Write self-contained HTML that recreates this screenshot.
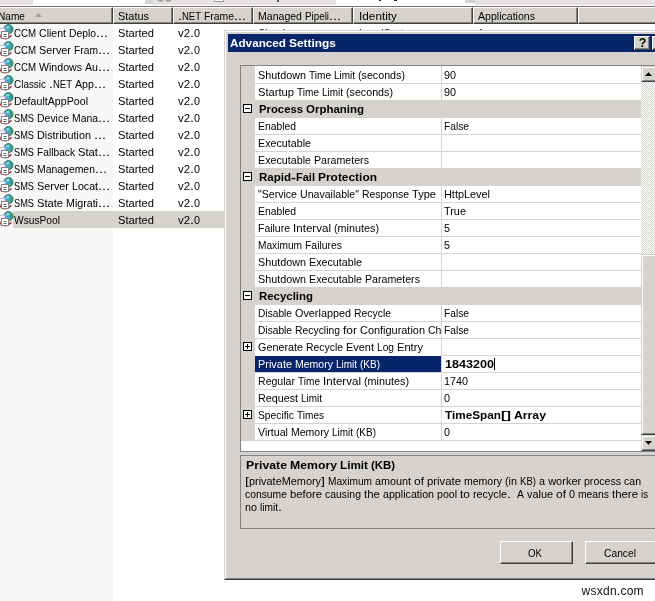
<!DOCTYPE html><html><head><meta charset="utf-8"><title>Advanced Settings</title><style>
html,body{margin:0;padding:0;background:#fff;}
body{width:655px;height:601px;overflow:hidden;position:relative;font-family:"Liberation Sans",sans-serif;font-size:11px;color:#000;}
div,span{position:absolute;box-sizing:border-box;}
.t{white-space:pre;line-height:13px;height:13px;font-size:11px;word-spacing:-0.06px;}
.b{font-weight:bold;}
.t span{position:static;display:inline-block;transform-origin:0 0;}
.hd{top:7px;height:17px;background:#d6d3ce;border-top:1px solid #fff;border-left:1px solid #fff;border-right:1px solid #424142;border-bottom:1px solid #424142;}
.hd i{position:absolute;right:0;top:0;bottom:0;width:1px;background:#848284;}
.hd b{position:absolute;left:0;right:0;bottom:0;height:1px;background:#848284;}
.rb{background:#d6d3ce;border:1px solid #fff;border-right-color:#424142;border-bottom-color:#424142;}
.rb>i{position:absolute;left:0;top:0;right:0;bottom:0;border-right:1px solid #848284;border-bottom:1px solid #848284;}
.sb{background:#d6d3ce;border:1px solid #d6d3ce;border-right-color:#424142;border-bottom-color:#424142;}
.sb>i{position:absolute;left:0;top:0;right:0;bottom:0;border:1px solid #fff;border-right-color:#848284;border-bottom-color:#848284;}
svg{position:absolute;overflow:visible;}
#all{left:0;top:0;width:655px;height:601px;overflow:hidden;will-change:transform;}
</style></head><body><div id="all">
<div style="left:0;top:0;width:33px;height:5px;background:#e7e2df"></div>
<div style="left:145px;top:0;width:8px;height:4px;background:#d6d3ce"></div>
<div style="left:153px;top:0;width:183px;height:5px;background:#e7e2df"></div>
<div style="left:157px;top:-5px;width:7px;height:7px;border-radius:4px;background:#a8a4a0"></div>
<div style="left:165px;top:-5px;width:7px;height:7px;border-radius:4px;background:#a8a4a0"></div>
<div style="left:214px;top:0;width:10px;height:2px;background:#fff;border:1px solid #999;border-top:0"></div>
<div style="left:277px;top:0;width:2px;height:2px;background:#555"></div>
<div style="left:379px;top:0;width:2px;height:1px;background:#222"></div>
<div style="left:394px;top:0;width:3px;height:1px;background:#222"></div>
<div style="left:465px;top:0;width:10px;height:3px;background:#d6d3ce"></div>
<div style="left:475px;top:0;width:180px;height:5px;background:#e7e2df"></div>
<div style="left:0;top:6px;width:655px;height:1px;background:#757575"></div>
<div style="left:0;top:24px;width:113px;height:577px;background:#f7f7f7"></div>
<div class="hd" style="left:-2px;width:115px"><i></i><b></b></div>
<div class="hd" style="left:113px;width:60px"><i></i><b></b></div>
<div class="hd" style="left:173px;width:80px"><i></i><b></b></div>
<div class="hd" style="left:253px;width:100px"><i></i><b></b></div>
<div class="hd" style="left:353px;width:120px"><i></i><b></b></div>
<div class="hd" style="left:473px;width:105px"><i></i><b></b></div>
<div class="hd" style="left:578px;width:90px"><i></i><b></b></div>
<svg style="left:35px;top:13px" width="7" height="4"><path d="M0 4 L3.5 0 L7 4Z" fill="#a09c98"/></svg>
<svg style="left:-3px;top:24px" width="16" height="16" viewBox="0 0 16 16">
<g transform="translate(0.9,-0.2) scale(0.96)">
<circle cx="11" cy="5.6" r="4.8" fill="#46a2da" stroke="#2a6e62" stroke-width="0.9"/>
<path d="M12 1.2 Q15.7 2.8 15.7 6 Q15.3 9.3 12.6 10.3 Q13.6 8 13 5.5 Q12.6 3.2 12 1.2Z" fill="#36a058"/>
<path d="M7.2 2.6 Q8.6 0.9 10.6 1 Q9.8 2.6 8.2 3.2Z" fill="#3a9466"/>
<ellipse cx="10.3" cy="3.6" rx="1.8" ry="1.2" fill="#8fd4f0"/>
</g>
<path d="M2.4 11.6 Q8 17.6 14.4 11.4" fill="none" stroke="#a43e34" stroke-width="1.7"/>
<rect x="1.5" y="4.500" width="6.500" height="6" fill="#f6f4fa" stroke="#c4c0cc"/>
<rect x="4.5" y="7.500" width="7" height="7" fill="#fff" stroke="#8c8282"/>
<path d="M6.5 10.500 H9.5 M6.5 12.500 H9.5" stroke="#4a6a88" stroke-width="1"/>
</svg>
<svg style="left:-3px;top:41px" width="16" height="16" viewBox="0 0 16 16">
<g transform="translate(0.9,-0.2) scale(0.96)">
<circle cx="11" cy="5.6" r="4.8" fill="#46a2da" stroke="#2a6e62" stroke-width="0.9"/>
<path d="M12 1.2 Q15.7 2.8 15.7 6 Q15.3 9.3 12.6 10.3 Q13.6 8 13 5.5 Q12.6 3.2 12 1.2Z" fill="#36a058"/>
<path d="M7.2 2.6 Q8.6 0.9 10.6 1 Q9.8 2.6 8.2 3.2Z" fill="#3a9466"/>
<ellipse cx="10.3" cy="3.6" rx="1.8" ry="1.2" fill="#8fd4f0"/>
</g>
<path d="M2.4 11.6 Q8 17.6 14.4 11.4" fill="none" stroke="#a43e34" stroke-width="1.7"/>
<rect x="1.5" y="4.500" width="6.500" height="6" fill="#f6f4fa" stroke="#c4c0cc"/>
<rect x="4.5" y="7.500" width="7" height="7" fill="#fff" stroke="#8c8282"/>
<path d="M6.5 10.500 H9.5 M6.5 12.500 H9.5" stroke="#4a6a88" stroke-width="1"/>
</svg>
<svg style="left:-3px;top:58px" width="16" height="16" viewBox="0 0 16 16">
<g transform="translate(0.9,-0.2) scale(0.96)">
<circle cx="11" cy="5.6" r="4.8" fill="#46a2da" stroke="#2a6e62" stroke-width="0.9"/>
<path d="M12 1.2 Q15.7 2.8 15.7 6 Q15.3 9.3 12.6 10.3 Q13.6 8 13 5.5 Q12.6 3.2 12 1.2Z" fill="#36a058"/>
<path d="M7.2 2.6 Q8.6 0.9 10.6 1 Q9.8 2.6 8.2 3.2Z" fill="#3a9466"/>
<ellipse cx="10.3" cy="3.6" rx="1.8" ry="1.2" fill="#8fd4f0"/>
</g>
<path d="M2.4 11.6 Q8 17.6 14.4 11.4" fill="none" stroke="#a43e34" stroke-width="1.7"/>
<rect x="1.5" y="4.500" width="6.500" height="6" fill="#f6f4fa" stroke="#c4c0cc"/>
<rect x="4.5" y="7.500" width="7" height="7" fill="#fff" stroke="#8c8282"/>
<path d="M6.5 10.500 H9.5 M6.5 12.500 H9.5" stroke="#4a6a88" stroke-width="1"/>
</svg>
<svg style="left:-3px;top:75px" width="16" height="16" viewBox="0 0 16 16">
<g transform="translate(0.9,-0.2) scale(0.96)">
<circle cx="11" cy="5.6" r="4.8" fill="#46a2da" stroke="#2a6e62" stroke-width="0.9"/>
<path d="M12 1.2 Q15.7 2.8 15.7 6 Q15.3 9.3 12.6 10.3 Q13.6 8 13 5.5 Q12.6 3.2 12 1.2Z" fill="#36a058"/>
<path d="M7.2 2.6 Q8.6 0.9 10.6 1 Q9.8 2.6 8.2 3.2Z" fill="#3a9466"/>
<ellipse cx="10.3" cy="3.6" rx="1.8" ry="1.2" fill="#8fd4f0"/>
</g>
<path d="M2.4 11.6 Q8 17.6 14.4 11.4" fill="none" stroke="#a43e34" stroke-width="1.7"/>
<rect x="1.5" y="4.500" width="6.500" height="6" fill="#f6f4fa" stroke="#c4c0cc"/>
<rect x="4.5" y="7.500" width="7" height="7" fill="#fff" stroke="#8c8282"/>
<path d="M6.5 10.500 H9.5 M6.5 12.500 H9.5" stroke="#4a6a88" stroke-width="1"/>
</svg>
<svg style="left:-3px;top:92px" width="16" height="16" viewBox="0 0 16 16">
<g transform="translate(0.9,-0.2) scale(0.96)">
<circle cx="11" cy="5.6" r="4.8" fill="#46a2da" stroke="#2a6e62" stroke-width="0.9"/>
<path d="M12 1.2 Q15.7 2.8 15.7 6 Q15.3 9.3 12.6 10.3 Q13.6 8 13 5.5 Q12.6 3.2 12 1.2Z" fill="#36a058"/>
<path d="M7.2 2.6 Q8.6 0.9 10.6 1 Q9.8 2.6 8.2 3.2Z" fill="#3a9466"/>
<ellipse cx="10.3" cy="3.6" rx="1.8" ry="1.2" fill="#8fd4f0"/>
</g>
<path d="M2.4 11.6 Q8 17.6 14.4 11.4" fill="none" stroke="#a43e34" stroke-width="1.7"/>
<rect x="1.5" y="4.500" width="6.500" height="6" fill="#f6f4fa" stroke="#c4c0cc"/>
<rect x="4.5" y="7.500" width="7" height="7" fill="#fff" stroke="#8c8282"/>
<path d="M6.5 10.500 H9.5 M6.5 12.500 H9.5" stroke="#4a6a88" stroke-width="1"/>
</svg>
<svg style="left:-3px;top:109px" width="16" height="16" viewBox="0 0 16 16">
<g transform="translate(0.9,-0.2) scale(0.96)">
<circle cx="11" cy="5.6" r="4.8" fill="#46a2da" stroke="#2a6e62" stroke-width="0.9"/>
<path d="M12 1.2 Q15.7 2.8 15.7 6 Q15.3 9.3 12.6 10.3 Q13.6 8 13 5.5 Q12.6 3.2 12 1.2Z" fill="#36a058"/>
<path d="M7.2 2.6 Q8.6 0.9 10.6 1 Q9.8 2.6 8.2 3.2Z" fill="#3a9466"/>
<ellipse cx="10.3" cy="3.6" rx="1.8" ry="1.2" fill="#8fd4f0"/>
</g>
<path d="M2.4 11.6 Q8 17.6 14.4 11.4" fill="none" stroke="#a43e34" stroke-width="1.7"/>
<rect x="1.5" y="4.500" width="6.500" height="6" fill="#f6f4fa" stroke="#c4c0cc"/>
<rect x="4.5" y="7.500" width="7" height="7" fill="#fff" stroke="#8c8282"/>
<path d="M6.5 10.500 H9.5 M6.5 12.500 H9.5" stroke="#4a6a88" stroke-width="1"/>
</svg>
<svg style="left:-3px;top:126px" width="16" height="16" viewBox="0 0 16 16">
<g transform="translate(0.9,-0.2) scale(0.96)">
<circle cx="11" cy="5.6" r="4.8" fill="#46a2da" stroke="#2a6e62" stroke-width="0.9"/>
<path d="M12 1.2 Q15.7 2.8 15.7 6 Q15.3 9.3 12.6 10.3 Q13.6 8 13 5.5 Q12.6 3.2 12 1.2Z" fill="#36a058"/>
<path d="M7.2 2.6 Q8.6 0.9 10.6 1 Q9.8 2.6 8.2 3.2Z" fill="#3a9466"/>
<ellipse cx="10.3" cy="3.6" rx="1.8" ry="1.2" fill="#8fd4f0"/>
</g>
<path d="M2.4 11.6 Q8 17.6 14.4 11.4" fill="none" stroke="#a43e34" stroke-width="1.7"/>
<rect x="1.5" y="4.500" width="6.500" height="6" fill="#f6f4fa" stroke="#c4c0cc"/>
<rect x="4.5" y="7.500" width="7" height="7" fill="#fff" stroke="#8c8282"/>
<path d="M6.5 10.500 H9.5 M6.5 12.500 H9.5" stroke="#4a6a88" stroke-width="1"/>
</svg>
<svg style="left:-3px;top:143px" width="16" height="16" viewBox="0 0 16 16">
<g transform="translate(0.9,-0.2) scale(0.96)">
<circle cx="11" cy="5.6" r="4.8" fill="#46a2da" stroke="#2a6e62" stroke-width="0.9"/>
<path d="M12 1.2 Q15.7 2.8 15.7 6 Q15.3 9.3 12.6 10.3 Q13.6 8 13 5.5 Q12.6 3.2 12 1.2Z" fill="#36a058"/>
<path d="M7.2 2.6 Q8.6 0.9 10.6 1 Q9.8 2.6 8.2 3.2Z" fill="#3a9466"/>
<ellipse cx="10.3" cy="3.6" rx="1.8" ry="1.2" fill="#8fd4f0"/>
</g>
<path d="M2.4 11.6 Q8 17.6 14.4 11.4" fill="none" stroke="#a43e34" stroke-width="1.7"/>
<rect x="1.5" y="4.500" width="6.500" height="6" fill="#f6f4fa" stroke="#c4c0cc"/>
<rect x="4.5" y="7.500" width="7" height="7" fill="#fff" stroke="#8c8282"/>
<path d="M6.5 10.500 H9.5 M6.5 12.500 H9.5" stroke="#4a6a88" stroke-width="1"/>
</svg>
<svg style="left:-3px;top:160px" width="16" height="16" viewBox="0 0 16 16">
<g transform="translate(0.9,-0.2) scale(0.96)">
<circle cx="11" cy="5.6" r="4.8" fill="#46a2da" stroke="#2a6e62" stroke-width="0.9"/>
<path d="M12 1.2 Q15.7 2.8 15.7 6 Q15.3 9.3 12.6 10.3 Q13.6 8 13 5.5 Q12.6 3.2 12 1.2Z" fill="#36a058"/>
<path d="M7.2 2.6 Q8.6 0.9 10.6 1 Q9.8 2.6 8.2 3.2Z" fill="#3a9466"/>
<ellipse cx="10.3" cy="3.6" rx="1.8" ry="1.2" fill="#8fd4f0"/>
</g>
<path d="M2.4 11.6 Q8 17.6 14.4 11.4" fill="none" stroke="#a43e34" stroke-width="1.7"/>
<rect x="1.5" y="4.500" width="6.500" height="6" fill="#f6f4fa" stroke="#c4c0cc"/>
<rect x="4.5" y="7.500" width="7" height="7" fill="#fff" stroke="#8c8282"/>
<path d="M6.5 10.500 H9.5 M6.5 12.500 H9.5" stroke="#4a6a88" stroke-width="1"/>
</svg>
<svg style="left:-3px;top:177px" width="16" height="16" viewBox="0 0 16 16">
<g transform="translate(0.9,-0.2) scale(0.96)">
<circle cx="11" cy="5.6" r="4.8" fill="#46a2da" stroke="#2a6e62" stroke-width="0.9"/>
<path d="M12 1.2 Q15.7 2.8 15.7 6 Q15.3 9.3 12.6 10.3 Q13.6 8 13 5.5 Q12.6 3.2 12 1.2Z" fill="#36a058"/>
<path d="M7.2 2.6 Q8.6 0.9 10.6 1 Q9.8 2.6 8.2 3.2Z" fill="#3a9466"/>
<ellipse cx="10.3" cy="3.6" rx="1.8" ry="1.2" fill="#8fd4f0"/>
</g>
<path d="M2.4 11.6 Q8 17.6 14.4 11.4" fill="none" stroke="#a43e34" stroke-width="1.7"/>
<rect x="1.5" y="4.500" width="6.500" height="6" fill="#f6f4fa" stroke="#c4c0cc"/>
<rect x="4.5" y="7.500" width="7" height="7" fill="#fff" stroke="#8c8282"/>
<path d="M6.5 10.500 H9.5 M6.5 12.500 H9.5" stroke="#4a6a88" stroke-width="1"/>
</svg>
<svg style="left:-3px;top:194px" width="16" height="16" viewBox="0 0 16 16">
<g transform="translate(0.9,-0.2) scale(0.96)">
<circle cx="11" cy="5.6" r="4.8" fill="#46a2da" stroke="#2a6e62" stroke-width="0.9"/>
<path d="M12 1.2 Q15.7 2.8 15.7 6 Q15.3 9.3 12.6 10.3 Q13.6 8 13 5.5 Q12.6 3.2 12 1.2Z" fill="#36a058"/>
<path d="M7.2 2.6 Q8.6 0.9 10.6 1 Q9.8 2.6 8.2 3.2Z" fill="#3a9466"/>
<ellipse cx="10.3" cy="3.6" rx="1.8" ry="1.2" fill="#8fd4f0"/>
</g>
<path d="M2.4 11.6 Q8 17.6 14.4 11.4" fill="none" stroke="#a43e34" stroke-width="1.7"/>
<rect x="1.5" y="4.500" width="6.500" height="6" fill="#f6f4fa" stroke="#c4c0cc"/>
<rect x="4.5" y="7.500" width="7" height="7" fill="#fff" stroke="#8c8282"/>
<path d="M6.5 10.500 H9.5 M6.5 12.500 H9.5" stroke="#4a6a88" stroke-width="1"/>
</svg>
<div style="left:13px;top:211px;width:213px;height:17px;background:#d6d3ce"></div>
<svg style="left:-3px;top:211px" width="16" height="16" viewBox="0 0 16 16">
<g transform="translate(0.9,-0.2) scale(0.96)">
<circle cx="11" cy="5.6" r="4.8" fill="#46a2da" stroke="#2a6e62" stroke-width="0.9"/>
<path d="M12 1.2 Q15.7 2.8 15.7 6 Q15.3 9.3 12.6 10.3 Q13.6 8 13 5.5 Q12.6 3.2 12 1.2Z" fill="#36a058"/>
<path d="M7.2 2.6 Q8.6 0.9 10.6 1 Q9.8 2.6 8.2 3.2Z" fill="#3a9466"/>
<ellipse cx="10.3" cy="3.6" rx="1.8" ry="1.2" fill="#8fd4f0"/>
</g>
<path d="M2.4 11.6 Q8 17.6 14.4 11.4" fill="none" stroke="#a43e34" stroke-width="1.7"/>
<rect x="1.5" y="4.500" width="6.500" height="6" fill="#f6f4fa" stroke="#c4c0cc"/>
<rect x="4.5" y="7.500" width="7" height="7" fill="#fff" stroke="#8c8282"/>
<path d="M6.5 10.500 H9.5 M6.5 12.500 H9.5" stroke="#4a6a88" stroke-width="1"/>
</svg>
<span class="t" style="left:-1.90px;top:9.70px;"><span style="transform:scaleX(0.920);margin-right:-2.34px">Name</span></span>
<span class="t" style="left:118.10px;top:9.70px;"><span style="transform:scaleX(0.994);margin-right:-0.19px">Status</span></span>
<span class="t" style="left:178.10px;top:9.70px;"><span style="transform:scaleX(1.306);margin-right:0.94px">.</span><span style="transform:scaleX(0.864);margin-right:-3.00px">NET</span> <span style="transform:scaleX(0.944);margin-right:-1.78px">Frame</span><span style="transform:scaleX(1.308);margin-right:2.83px">...</span></span>
<span class="t" style="left:258.10px;top:9.70px;"><span style="transform:scaleX(0.959);margin-right:-1.88px">Managed</span> <span style="transform:scaleX(0.892);margin-right:-2.91px">Pipeli</span><span style="transform:scaleX(1.308);margin-right:2.83px">...</span></span>
<span class="t" style="left:359.10px;top:9.70px;"><span style="transform:scaleX(1.071);margin-right:2.53px">Identity</span></span>
<span class="t" style="left:478.10px;top:9.70px;"><span style="transform:scaleX(0.961);margin-right:-2.33px">Applications</span></span>
<span class="t" style="left:14.10px;top:26.70px;"><span style="transform:scaleX(0.878);margin-right:-3.06px">CCM</span> <span style="transform:scaleX(0.960);margin-right:-1.12px">Client</span> <span style="transform:scaleX(0.939);margin-right:-1.75px">Deplo</span><span style="transform:scaleX(1.308);margin-right:2.83px">...</span></span>
<span class="t" style="left:118.10px;top:26.70px;"><span style="transform:scaleX(1.015);margin-right:0.53px">Started</span></span>
<span class="t" style="left:178.10px;top:26.70px;"><span style="transform:scaleX(1.032);margin-right:0.38px">v2</span><span style="transform:scaleX(1.306);margin-right:0.94px">.</span><span style="transform:scaleX(0.980);margin-right:-0.12px">0</span></span>
<span class="t" style="left:14.10px;top:43.70px;"><span style="transform:scaleX(0.878);margin-right:-3.06px">CCM</span> <span style="transform:scaleX(0.987);margin-right:-0.41px">Server</span> <span style="transform:scaleX(0.935);margin-right:-1.67px">Fram</span><span style="transform:scaleX(1.308);margin-right:2.83px">...</span></span>
<span class="t" style="left:118.10px;top:43.70px;"><span style="transform:scaleX(1.015);margin-right:0.53px">Started</span></span>
<span class="t" style="left:178.10px;top:43.70px;"><span style="transform:scaleX(1.032);margin-right:0.38px">v2</span><span style="transform:scaleX(1.306);margin-right:0.94px">.</span><span style="transform:scaleX(0.980);margin-right:-0.12px">0</span></span>
<span class="t" style="left:14.10px;top:60.70px;"><span style="transform:scaleX(0.878);margin-right:-3.06px">CCM</span> <span style="transform:scaleX(0.964);margin-right:-1.62px">Windows</span> <span style="transform:scaleX(0.965);margin-right:-0.47px">Au</span><span style="transform:scaleX(1.308);margin-right:2.83px">...</span></span>
<span class="t" style="left:118.10px;top:60.70px;"><span style="transform:scaleX(1.015);margin-right:0.53px">Started</span></span>
<span class="t" style="left:178.10px;top:60.70px;"><span style="transform:scaleX(1.032);margin-right:0.38px">v2</span><span style="transform:scaleX(1.306);margin-right:0.94px">.</span><span style="transform:scaleX(0.980);margin-right:-0.12px">0</span></span>
<span class="t" style="left:14.10px;top:77.70px;"><span style="transform:scaleX(0.903);margin-right:-3.45px">Classic</span> <span style="transform:scaleX(1.306);margin-right:0.94px">.</span><span style="transform:scaleX(0.864);margin-right:-3.00px">NET</span> <span style="transform:scaleX(0.970);margin-right:-0.58px">App</span><span style="transform:scaleX(1.308);margin-right:2.83px">...</span></span>
<span class="t" style="left:118.10px;top:77.70px;"><span style="transform:scaleX(1.015);margin-right:0.53px">Started</span></span>
<span class="t" style="left:178.10px;top:77.70px;"><span style="transform:scaleX(1.032);margin-right:0.38px">v2</span><span style="transform:scaleX(1.306);margin-right:0.94px">.</span><span style="transform:scaleX(0.980);margin-right:-0.12px">0</span></span>
<span class="t" style="left:14.10px;top:94.70px;"><span style="transform:scaleX(0.968);margin-right:-2.45px">DefaultAppPool</span></span>
<span class="t" style="left:118.10px;top:94.70px;"><span style="transform:scaleX(1.015);margin-right:0.53px">Started</span></span>
<span class="t" style="left:178.10px;top:94.70px;"><span style="transform:scaleX(1.032);margin-right:0.38px">v2</span><span style="transform:scaleX(1.306);margin-right:0.94px">.</span><span style="transform:scaleX(0.980);margin-right:-0.12px">0</span></span>
<span class="t" style="left:14.10px;top:111.70px;"><span style="transform:scaleX(0.839);margin-right:-3.84px">SMS</span> <span style="transform:scaleX(0.952);margin-right:-1.62px">Device</span> <span style="transform:scaleX(0.944);margin-right:-1.53px">Mana</span><span style="transform:scaleX(1.308);margin-right:2.83px">...</span></span>
<span class="t" style="left:118.10px;top:111.70px;"><span style="transform:scaleX(1.015);margin-right:0.53px">Started</span></span>
<span class="t" style="left:178.10px;top:111.70px;"><span style="transform:scaleX(1.032);margin-right:0.38px">v2</span><span style="transform:scaleX(1.306);margin-right:0.94px">.</span><span style="transform:scaleX(0.980);margin-right:-0.12px">0</span></span>
<span class="t" style="left:14.10px;top:128.70px;"><span style="transform:scaleX(0.839);margin-right:-3.84px">SMS</span> <span style="transform:scaleX(0.981);margin-right:-1.03px">Distribution</span> <span style="transform:scaleX(1.308);margin-right:2.83px">...</span></span>
<span class="t" style="left:118.10px;top:128.70px;"><span style="transform:scaleX(1.015);margin-right:0.53px">Started</span></span>
<span class="t" style="left:178.10px;top:128.70px;"><span style="transform:scaleX(1.032);margin-right:0.38px">v2</span><span style="transform:scaleX(1.306);margin-right:0.94px">.</span><span style="transform:scaleX(0.980);margin-right:-0.12px">0</span></span>
<span class="t" style="left:14.10px;top:145.70px;"><span style="transform:scaleX(0.839);margin-right:-3.84px">SMS</span> <span style="transform:scaleX(0.928);margin-right:-2.97px">Fallback</span> <span style="transform:scaleX(1.022);margin-right:0.42px">Stat</span><span style="transform:scaleX(1.308);margin-right:2.83px">...</span></span>
<span class="t" style="left:118.10px;top:145.70px;"><span style="transform:scaleX(1.015);margin-right:0.53px">Started</span></span>
<span class="t" style="left:178.10px;top:145.70px;"><span style="transform:scaleX(1.032);margin-right:0.38px">v2</span><span style="transform:scaleX(1.306);margin-right:0.94px">.</span><span style="transform:scaleX(0.980);margin-right:-0.12px">0</span></span>
<span class="t" style="left:14.10px;top:162.70px;"><span style="transform:scaleX(0.839);margin-right:-3.84px">SMS</span> <span style="transform:scaleX(0.948);margin-right:-3.16px">Managemen</span><span style="transform:scaleX(1.308);margin-right:2.83px">...</span></span>
<span class="t" style="left:118.10px;top:162.70px;"><span style="transform:scaleX(1.015);margin-right:0.53px">Started</span></span>
<span class="t" style="left:178.10px;top:162.70px;"><span style="transform:scaleX(1.032);margin-right:0.38px">v2</span><span style="transform:scaleX(1.306);margin-right:0.94px">.</span><span style="transform:scaleX(0.980);margin-right:-0.12px">0</span></span>
<span class="t" style="left:14.10px;top:179.70px;"><span style="transform:scaleX(0.839);margin-right:-3.84px">SMS</span> <span style="transform:scaleX(0.987);margin-right:-0.41px">Server</span> <span style="transform:scaleX(0.966);margin-right:-0.92px">Locat</span><span style="transform:scaleX(1.308);margin-right:2.83px">...</span></span>
<span class="t" style="left:118.10px;top:179.70px;"><span style="transform:scaleX(1.015);margin-right:0.53px">Started</span></span>
<span class="t" style="left:178.10px;top:179.70px;"><span style="transform:scaleX(1.032);margin-right:0.38px">v2</span><span style="transform:scaleX(1.306);margin-right:0.94px">.</span><span style="transform:scaleX(0.980);margin-right:-0.12px">0</span></span>
<span class="t" style="left:14.10px;top:196.70px;"><span style="transform:scaleX(0.839);margin-right:-3.84px">SMS</span> <span style="transform:scaleX(1.012);margin-right:0.31px">State</span> <span style="transform:scaleX(0.969);margin-right:-1.02px">Migrati</span><span style="transform:scaleX(1.308);margin-right:2.83px">...</span></span>
<span class="t" style="left:118.10px;top:196.70px;"><span style="transform:scaleX(1.015);margin-right:0.53px">Started</span></span>
<span class="t" style="left:178.10px;top:196.70px;"><span style="transform:scaleX(1.032);margin-right:0.38px">v2</span><span style="transform:scaleX(1.306);margin-right:0.94px">.</span><span style="transform:scaleX(0.980);margin-right:-0.12px">0</span></span>
<span class="t" style="left:14.10px;top:213.70px;"><span style="transform:scaleX(0.929);margin-right:-3.53px">WsusPool</span></span>
<span class="t" style="left:118.10px;top:213.70px;"><span style="transform:scaleX(1.015);margin-right:0.53px">Started</span></span>
<span class="t" style="left:178.10px;top:213.70px;"><span style="transform:scaleX(1.032);margin-right:0.38px">v2</span><span style="transform:scaleX(1.306);margin-right:0.94px">.</span><span style="transform:scaleX(0.980);margin-right:-0.12px">0</span></span>
<span class="t" style="left:258.10px;top:26.70px;"><span style="transform:scaleX(0.903);margin-right:-3.45px">Classic</span></span>
<span class="t" style="left:359.10px;top:26.70px;"><span style="transform:scaleX(0.937);margin-right:-3.98px">LocalSystem</span></span>
<span class="t" style="left:478.10px;top:26.70px;"><span style="transform:scaleX(0.980);margin-right:-0.12px">1</span></span>
<div style="left:224px;top:30px;width:440px;height:550px;background:#d6d3ce;border:1px solid #d6d3ce;border-right-color:#424142;border-bottom-color:#424142;"><div style="left:0;top:0;right:0;bottom:0;border:1px solid #fff;border-right-color:#848284;border-bottom-color:#848284"></div></div>
<div style="left:228px;top:34px;width:427px;height:18px;background:#08246b"></div>
<div class="rb" style="left:634px;top:36px;width:16px;height:14px"><i></i></div>
<span class="b" style="left:638.8px;top:36px;font-size:12.5px;line-height:14px;white-space:pre">?</span>
<div class="rb" style="left:652px;top:36px;width:16px;height:14px"><i></i></div>
<div style="left:240px;top:65px;width:420px;height:387px;background:#fff;border:1px solid #848284"></div>
<div style="left:241px;top:66px;width:14px;height:375px;background:#d6d3ce"></div>
<div style="left:441px;top:66px;width:1px;height:375px;background:#d5d4d1"></div>
<div style="left:255px;top:83px;width:386px;height:1px;background:#d5d4d1"></div>
<div style="left:255px;top:100px;width:386px;height:1px;background:#d5d4d1"></div>
<div style="left:241px;top:100px;width:400px;height:18px;background:#d6d3ce"></div>
<svg style="left:243px;top:104px" width="9" height="9"><rect x="0.5" y="0.5" width="8" height="8" fill="#fff" stroke="#000"/><path d="M2 4.5H7" stroke="#000"/></svg>
<div style="left:255px;top:134px;width:386px;height:1px;background:#d5d4d1"></div>
<div style="left:255px;top:151px;width:386px;height:1px;background:#d5d4d1"></div>
<div style="left:255px;top:168px;width:386px;height:1px;background:#d5d4d1"></div>
<div style="left:241px;top:168px;width:400px;height:18px;background:#d6d3ce"></div>
<svg style="left:243px;top:172px" width="9" height="9"><rect x="0.5" y="0.5" width="8" height="8" fill="#fff" stroke="#000"/><path d="M2 4.5H7" stroke="#000"/></svg>
<div style="left:255px;top:202px;width:386px;height:1px;background:#d5d4d1"></div>
<div style="left:255px;top:219px;width:386px;height:1px;background:#d5d4d1"></div>
<div style="left:255px;top:236px;width:386px;height:1px;background:#d5d4d1"></div>
<div style="left:255px;top:253px;width:386px;height:1px;background:#d5d4d1"></div>
<div style="left:255px;top:270px;width:386px;height:1px;background:#d5d4d1"></div>
<div style="left:255px;top:287px;width:386px;height:1px;background:#d5d4d1"></div>
<div style="left:241px;top:287px;width:400px;height:18px;background:#d6d3ce"></div>
<svg style="left:243px;top:291px" width="9" height="9"><rect x="0.5" y="0.5" width="8" height="8" fill="#fff" stroke="#000"/><path d="M2 4.5H7" stroke="#000"/></svg>
<div style="left:255px;top:321px;width:386px;height:1px;background:#d5d4d1"></div>
<div style="left:255px;top:338px;width:386px;height:1px;background:#d5d4d1"></div>
<div style="left:255px;top:355px;width:386px;height:1px;background:#d5d4d1"></div>
<svg style="left:243px;top:342px" width="9" height="9"><rect x="0.5" y="0.5" width="8" height="8" fill="#fff" stroke="#000"/><path d="M2 4.5H7M4.5 2V7" stroke="#000"/></svg>
<div style="left:255px;top:372px;width:386px;height:1px;background:#d5d4d1"></div>
<div style="left:255px;top:355px;width:186px;height:1px;background:#fff"></div>
<div style="left:255px;top:356px;width:186px;height:16px;background:#08246b"></div>
<div style="left:494px;top:358px;width:1px;height:12px;background:#000"></div>
<div style="left:255px;top:389px;width:386px;height:1px;background:#d5d4d1"></div>
<div style="left:255px;top:406px;width:386px;height:1px;background:#d5d4d1"></div>
<div style="left:255px;top:423px;width:386px;height:1px;background:#d5d4d1"></div>
<svg style="left:243px;top:410px" width="9" height="9"><rect x="0.5" y="0.5" width="8" height="8" fill="#fff" stroke="#000"/><path d="M2 4.5H7M4.5 2V7" stroke="#000"/></svg>
<div style="left:255px;top:440px;width:386px;height:1px;background:#d5d4d1"></div>
<div style="left:641px;top:66px;width:16px;height:385px;background:conic-gradient(#fff 25%,#d6d3ce 0 50%,#fff 0 75%,#d6d3ce 0) 1px 0/2px 2px"></div>
<div class="sb" style="left:641px;top:66px;width:17px;height:16px"><i></i></div>
<svg style="left:645px;top:72px" width="7" height="4"><path d="M0 4 L3.5 0.2 L7 4Z" fill="#000"/></svg>
<div class="sb" style="left:641px;top:254px;width:17px;height:181px"><i></i></div>
<div class="sb" style="left:641px;top:435px;width:17px;height:16px"><i></i></div>
<svg style="left:645px;top:441px" width="7" height="4"><path d="M0 0 L3.5 3.8 L7 0Z" fill="#000"/></svg>
<div style="left:240px;top:455px;width:420px;height:74px;border:1px solid #848284"></div>
<div class="rb" style="left:500px;top:541px;width:73px;height:23px"><i></i></div>
<div class="rb" style="left:585px;top:541px;width:73px;height:23px"><i></i></div>
<span class="t b" style="left:229.70px;top:36.70px;color:#fff;"><span style="transform:scaleX(1.065);margin-right:3.42px">Advanced</span> <span style="transform:scaleX(1.083);margin-right:3.59px">Settings</span></span>
<span class="t" style="left:258.10px;top:68.70px;"><span style="transform:scaleX(0.981);margin-right:-0.94px">Shutdown</span> <span style="transform:scaleX(0.915);margin-right:-2.05px">Time</span> <span style="transform:scaleX(0.904);margin-right:-2.23px">Limit</span> <span style="transform:scaleX(0.973);margin-right:-1.30px">(seconds)</span></span>
<span class="t" style="left:444.10px;top:68.70px;"><span style="transform:scaleX(0.980);margin-right:-0.25px">90</span></span>
<span class="t" style="left:258.10px;top:85.70px;"><span style="transform:scaleX(1.015);margin-right:0.53px">Startup</span> <span style="transform:scaleX(0.915);margin-right:-2.05px">Time</span> <span style="transform:scaleX(0.904);margin-right:-2.23px">Limit</span> <span style="transform:scaleX(0.973);margin-right:-1.30px">(seconds)</span></span>
<span class="t" style="left:444.10px;top:85.70px;"><span style="transform:scaleX(0.980);margin-right:-0.25px">90</span></span>
<span class="t b" style="left:258.70px;top:102.70px;"><span style="transform:scaleX(1.028);margin-right:1.19px">Process</span> <span style="transform:scaleX(1.043);margin-right:2.39px">Orphaning</span></span>
<span class="t" style="left:258.10px;top:119.70px;"><span style="transform:scaleX(0.941);margin-right:-2.38px">Enabled</span></span>
<span class="t" style="left:444.10px;top:119.70px;"><span style="transform:scaleX(0.929);margin-right:-1.91px">False</span></span>
<span class="t" style="left:258.10px;top:136.70px;"><span style="transform:scaleX(0.974);margin-right:-1.44px">Executable</span></span>
<span class="t" style="left:258.10px;top:153.70px;"><span style="transform:scaleX(0.974);margin-right:-1.44px">Executable</span> <span style="transform:scaleX(0.967);margin-right:-1.86px">Parameters</span></span>
<span class="t b" style="left:258.70px;top:170.70px;"><span style="transform:scaleX(1.047);margin-right:1.44px">Rapid</span><span style="transform:scaleX(1.362);margin-right:1.33px">-</span><span style="transform:scaleX(1.002);margin-right:0.05px">Fail</span> <span style="transform:scaleX(1.084);margin-right:4.59px">Protection</span></span>
<span class="t" style="left:258.10px;top:187.70px;"><span style="transform:scaleX(0.961);margin-right:-1.59px">"Service</span> <span style="transform:scaleX(0.961);margin-right:-2.39px">Unavailable"</span> <span style="transform:scaleX(0.949);margin-right:-2.55px">Response</span> <span style="transform:scaleX(1.006);margin-right:0.14px">Type</span></span>
<span class="t" style="left:444.10px;top:187.70px;"><span style="transform:scaleX(0.990);margin-right:-0.48px">HttpLevel</span></span>
<span class="t" style="left:258.10px;top:204.70px;"><span style="transform:scaleX(0.941);margin-right:-2.38px">Enabled</span></span>
<span class="t" style="left:444.10px;top:204.70px;"><span style="transform:scaleX(0.990);margin-right:-0.22px">True</span></span>
<span class="t" style="left:258.10px;top:221.70px;"><span style="transform:scaleX(0.952);margin-right:-1.62px">Failure</span> <span style="transform:scaleX(1.053);margin-right:1.92px">Interval</span> <span style="transform:scaleX(0.982);margin-right:-0.84px">(minutes)</span></span>
<span class="t" style="left:444.10px;top:221.70px;"><span style="transform:scaleX(0.980);margin-right:-0.12px">5</span></span>
<span class="t" style="left:258.10px;top:238.70px;"><span style="transform:scaleX(0.923);margin-right:-3.67px">Maximum</span> <span style="transform:scaleX(0.946);margin-right:-2.12px">Failures</span></span>
<span class="t" style="left:444.10px;top:238.70px;"><span style="transform:scaleX(0.980);margin-right:-0.12px">5</span></span>
<span class="t" style="left:258.10px;top:255.70px;"><span style="transform:scaleX(0.981);margin-right:-0.94px">Shutdown</span> <span style="transform:scaleX(0.974);margin-right:-1.44px">Executable</span></span>
<span class="t" style="left:258.10px;top:272.70px;"><span style="transform:scaleX(0.981);margin-right:-0.94px">Shutdown</span> <span style="transform:scaleX(0.974);margin-right:-1.44px">Executable</span> <span style="transform:scaleX(0.967);margin-right:-1.86px">Parameters</span></span>
<span class="t b" style="left:258.70px;top:289.70px;"><span style="transform:scaleX(1.039);margin-right:2.03px">Recycling</span></span>
<span class="t" style="left:258.10px;top:306.70px;"><span style="transform:scaleX(0.927);margin-right:-2.69px">Disable</span> <span style="transform:scaleX(0.985);margin-right:-0.88px">Overlapped</span> <span style="transform:scaleX(0.946);margin-right:-2.12px">Recycle</span></span>
<span class="t" style="left:444.10px;top:306.70px;"><span style="transform:scaleX(0.929);margin-right:-1.91px">False</span></span>
<div style="left:258px;top:322px;width:183px;height:16px;overflow:hidden"><span class="t" style="left:0.10px;top:1.70px;"><span style="transform:scaleX(0.927);margin-right:-2.69px">Disable</span> <span style="transform:scaleX(0.944);margin-right:-2.69px">Recycling</span> <span style="transform:scaleX(1.090);margin-right:1.16px">for</span> <span style="transform:scaleX(0.993);margin-right:-0.44px">Configuration</span> <span style="transform:scaleX(0.954);margin-right:-2.05px">Changes</span></span></div>
<span class="t" style="left:444.10px;top:323.70px;"><span style="transform:scaleX(0.929);margin-right:-1.91px">False</span></span>
<span class="t" style="left:258.10px;top:340.70px;"><span style="transform:scaleX(0.981);margin-right:-0.88px">Generate</span> <span style="transform:scaleX(0.946);margin-right:-2.12px">Recycle</span> <span style="transform:scaleX(0.995);margin-right:-0.14px">Event</span> <span style="transform:scaleX(0.926);margin-right:-1.36px">Log</span> <span style="transform:scaleX(1.012);margin-right:0.31px">Entry</span></span>
<span class="t" style="left:258.10px;top:357.70px;color:#fff;"><span style="transform:scaleX(0.993);margin-right:-0.25px">Private</span> <span style="transform:scaleX(0.956);margin-right:-1.73px">Memory</span> <span style="transform:scaleX(0.904);margin-right:-2.23px">Limit</span> <span style="transform:scaleX(0.909);margin-right:-2.00px">(KB)</span></span>
<span class="t b" style="left:444.70px;top:357.70px;"><span style="transform:scaleX(1.144);margin-right:6.17px">1843200</span></span>
<span class="t" style="left:258.10px;top:374.70px;"><span style="transform:scaleX(0.960);margin-right:-1.53px">Regular</span> <span style="transform:scaleX(0.915);margin-right:-2.05px">Time</span> <span style="transform:scaleX(1.053);margin-right:1.92px">Interval</span> <span style="transform:scaleX(0.982);margin-right:-0.84px">(minutes)</span></span>
<span class="t" style="left:444.10px;top:374.70px;"><span style="transform:scaleX(0.980);margin-right:-0.48px">1740</span></span>
<span class="t" style="left:258.10px;top:391.70px;"><span style="transform:scaleX(0.976);margin-right:-0.98px">Request</span> <span style="transform:scaleX(0.904);margin-right:-2.23px">Limit</span></span>
<span class="t" style="left:444.10px;top:391.70px;"><span style="transform:scaleX(0.980);margin-right:-0.12px">0</span></span>
<span class="t" style="left:258.10px;top:408.70px;"><span style="transform:scaleX(0.934);margin-right:-2.53px">Specific</span> <span style="transform:scaleX(0.914);margin-right:-2.55px">Times</span></span>
<span class="t b" style="left:444.70px;top:408.70px;"><span style="transform:scaleX(1.069);margin-right:3.62px">TimeSpan</span><span style="transform:scaleX(1.362);margin-right:1.33px">[</span><span style="transform:scaleX(1.362);margin-right:1.33px">]</span> <span style="transform:scaleX(1.113);margin-right:3.25px">Array</span></span>
<span class="t" style="left:258.10px;top:425.70px;"><span style="transform:scaleX(0.968);margin-right:-0.98px">Virtual</span> <span style="transform:scaleX(0.956);margin-right:-1.73px">Memory</span> <span style="transform:scaleX(0.904);margin-right:-2.23px">Limit</span> <span style="transform:scaleX(0.909);margin-right:-2.00px">(KB)</span></span>
<span class="t" style="left:444.10px;top:425.70px;"><span style="transform:scaleX(0.980);margin-right:-0.12px">0</span></span>
<span class="t b" style="left:245.70px;top:458.70px;"><span style="transform:scaleX(1.117);margin-right:4.30px">Private</span> <span style="transform:scaleX(1.114);margin-right:4.81px">Memory</span> <span style="transform:scaleX(1.065);margin-right:1.72px">Limit</span> <span style="transform:scaleX(1.034);margin-right:0.78px">(KB)</span></span>
<span class="t" style="left:245.10px;top:474.70px;"><span style="transform:scaleX(1.306);margin-right:0.94px">[</span><span style="transform:scaleX(0.990);margin-right:-0.75px">privateMemory</span><span style="transform:scaleX(1.306);margin-right:0.94px">]</span> <span style="transform:scaleX(0.923);margin-right:-3.67px">Maximum</span> <span style="transform:scaleX(0.981);margin-right:-0.70px">amount</span> <span style="transform:scaleX(1.088);margin-right:0.81px">of</span> <span style="transform:scaleX(1.029);margin-right:0.97px">private</span> <span style="transform:scaleX(0.956);margin-right:-1.73px">memory</span> <span style="transform:scaleX(0.981);margin-right:-0.23px">(in</span> <span style="transform:scaleX(0.872);margin-right:-2.34px">KB)</span> <span style="transform:scaleX(0.980);margin-right:-0.12px">a</span> <span style="transform:scaleX(1.000);margin-right:-0.02px">worker</span> <span style="transform:scaleX(0.960);margin-right:-1.53px">process</span> <span style="transform:scaleX(0.958);margin-right:-0.75px">can</span></span>
<span class="t" style="left:245.10px;top:487.70px;"><span style="transform:scaleX(0.941);margin-right:-2.64px">consume</span> <span style="transform:scaleX(1.026);margin-right:0.80px">before</span> <span style="transform:scaleX(0.949);margin-right:-1.92px">causing</span> <span style="transform:scaleX(1.046);margin-right:0.70px">the</span> <span style="transform:scaleX(0.970);margin-right:-1.59px">application</span> <span style="transform:scaleX(0.962);margin-right:-0.80px">pool</span> <span style="transform:scaleX(1.088);margin-right:0.81px">to</span> <span style="transform:scaleX(0.976);margin-right:-0.84px">recycle</span><span style="transform:scaleX(1.306);margin-right:0.94px">.</span>  <span style="transform:scaleX(0.953);margin-right:-0.34px">A</span> <span style="transform:scaleX(0.989);margin-right:-0.30px">value</span> <span style="transform:scaleX(1.088);margin-right:0.81px">of</span> <span style="transform:scaleX(0.980);margin-right:-0.12px">0</span> <span style="transform:scaleX(0.939);margin-right:-2.03px">means</span> <span style="transform:scaleX(1.037);margin-right:0.92px">there</span> <span style="transform:scaleX(0.880);margin-right:-0.95px">is</span></span>
<span class="t" style="left:245.10px;top:500.70px;"><span style="transform:scaleX(0.980);margin-right:-0.25px">no</span> <span style="transform:scaleX(0.920);margin-right:-1.56px">limit</span><span style="transform:scaleX(1.306);margin-right:0.94px">.</span></span>
<span class="t" style="left:528.10px;top:546.70px;"><span style="transform:scaleX(0.880);margin-right:-1.91px">OK</span></span>
<span class="t" style="left:604.10px;top:546.70px;"><span style="transform:scaleX(0.934);margin-right:-2.25px">Cancel</span></span>
<span style="left:581.6px;top:584px;font-size:12px;line-height:15px;white-space:pre;letter-spacing:0.25px;color:#111">wsxdn.com</span>
</div></body></html>
